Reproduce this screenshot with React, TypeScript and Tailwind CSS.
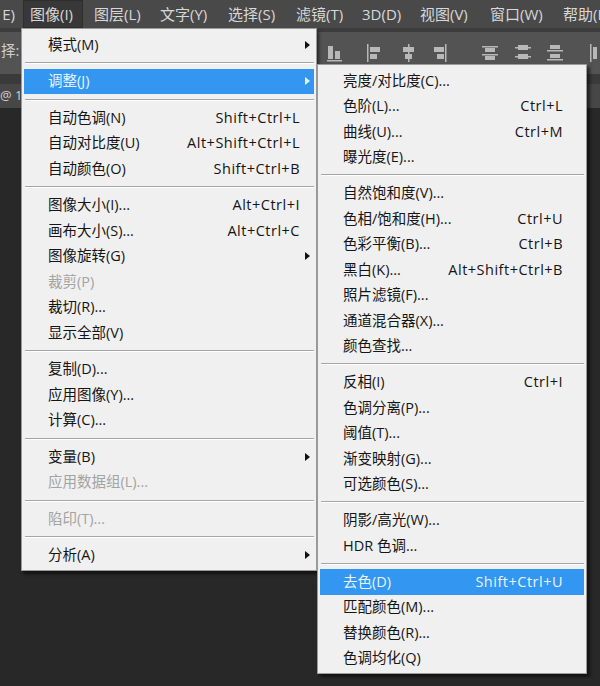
import React from 'react';

type Item =
  | { kind: 'sep' }
  | { kind: 'item'; label: string; shortcut?: string; arrow?: boolean; disabled?: boolean; active?: boolean };

const imageMenu: Item[] = [
  { kind: 'item', label: '模式(M)', arrow: true },
  { kind: 'sep' },
  { kind: 'item', label: '调整(J)', arrow: true, active: true },
  { kind: 'sep' },
  { kind: 'item', label: '自动色调(N)', shortcut: 'Shift+Ctrl+L' },
  { kind: 'item', label: '自动对比度(U)', shortcut: 'Alt+Shift+Ctrl+L' },
  { kind: 'item', label: '自动颜色(O)', shortcut: 'Shift+Ctrl+B' },
  { kind: 'sep' },
  { kind: 'item', label: '图像大小(I)...', shortcut: 'Alt+Ctrl+I' },
  { kind: 'item', label: '画布大小(S)...', shortcut: 'Alt+Ctrl+C' },
  { kind: 'item', label: '图像旋转(G)', arrow: true },
  { kind: 'item', label: '裁剪(P)', disabled: true },
  { kind: 'item', label: '裁切(R)...' },
  { kind: 'item', label: '显示全部(V)' },
  { kind: 'sep' },
  { kind: 'item', label: '复制(D)...' },
  { kind: 'item', label: '应用图像(Y)...' },
  { kind: 'item', label: '计算(C)...' },
  { kind: 'sep' },
  { kind: 'item', label: '变量(B)', arrow: true },
  { kind: 'item', label: '应用数据组(L)...', disabled: true },
  { kind: 'sep' },
  { kind: 'item', label: '陷印(T)...', disabled: true },
  { kind: 'sep' },
  { kind: 'item', label: '分析(A)', arrow: true },
];

const adjustMenu: Item[] = [
  { kind: 'item', label: '亮度/对比度(C)...' },
  { kind: 'item', label: '色阶(L)...', shortcut: 'Ctrl+L' },
  { kind: 'item', label: '曲线(U)...', shortcut: 'Ctrl+M' },
  { kind: 'item', label: '曝光度(E)...' },
  { kind: 'sep' },
  { kind: 'item', label: '自然饱和度(V)...' },
  { kind: 'item', label: '色相/饱和度(H)...', shortcut: 'Ctrl+U' },
  { kind: 'item', label: '色彩平衡(B)...', shortcut: 'Ctrl+B' },
  { kind: 'item', label: '黑白(K)...', shortcut: 'Alt+Shift+Ctrl+B' },
  { kind: 'item', label: '照片滤镜(F)...' },
  { kind: 'item', label: '通道混合器(X)...' },
  { kind: 'item', label: '颜色查找...' },
  { kind: 'sep' },
  { kind: 'item', label: '反相(I)', shortcut: 'Ctrl+I' },
  { kind: 'item', label: '色调分离(P)...' },
  { kind: 'item', label: '阈值(T)...' },
  { kind: 'item', label: '渐变映射(G)...' },
  { kind: 'item', label: '可选颜色(S)...' },
  { kind: 'sep' },
  { kind: 'item', label: '阴影/高光(W)...' },
  { kind: 'item', label: 'HDR 色调...' },
  { kind: 'sep' },
  { kind: 'item', label: '去色(D)', shortcut: 'Shift+Ctrl+U', active: true },
  { kind: 'item', label: '匹配颜色(M)...' },
  { kind: 'item', label: '替换颜色(R)...' },
  { kind: 'item', label: '色调均化(Q)' },
];

const topMenus = [
  { label: '图层(L)', w: 'w-[66px]' },
  { label: '文字(Y)', w: 'w-[68px]' },
  { label: '选择(S)', w: 'w-[68px]' },
  { label: '滤镜(T)', w: 'w-[66px]' },
  { label: '3D(D)', w: 'w-[58px]' },
  { label: '视图(V)', w: 'w-[70px]' },
  { label: '窗口(W)', w: 'w-[73px]' },
  { label: '帮助(H)', w: 'w-[60px]' },
];

function Arrow({ light }: { light?: boolean }) {
  return (
    <span
      className={`ml-[5px] block h-0 w-0 border-y-[4px] border-l-[5px] border-y-transparent ${
        light ? 'border-l-[#e8f4ff]' : 'border-l-[#111111]'
      }`}
    />
  );
}

function Menu({ items, className, sep, row }: { items: Item[]; className: string; sep: string; row: string }) {
  return (
    <div className={className}>
      {items.map((it, i) =>
        it.kind === 'sep' ? (
          <div key={i} className={`flex items-center pl-[1px] ${sep}`}>
            <div className="h-[2px] w-full border-t border-b border-t-[#a6a6a6] border-b-white" />
          </div>
        ) : (
          <div
            key={i}
            className={`grid h-[25.5px] grid-cols-[1fr_auto_14px] items-center ${row} ${
              it.active ? 'bg-[#3396f0] text-[#e8f4ff]' : it.disabled ? 'text-[#a3a3a3]' : 'text-[#151515]'
            }`}
          >
            <span className="whitespace-nowrap">{it.label}</span>
            <span className="whitespace-nowrap tracking-[0.5px]">{it.shortcut}</span>
            <span>{it.arrow && <Arrow light={it.active} />}</span>
          </div>
        )
      )}
    </div>
  );
}

// toolbar alignment glyphs, only the right part shows past the menus
function AlignIcon({ type }: { type: number }) {
  const c = 'fill-[#b8b8b8]';
  return (
    <svg width="16" height="20" viewBox="0 0 16 20" className="shrink-0">
      {type === 0 && (
        <g className={c}>
          <rect x="1" y="3" width="5" height="13" />
          <rect x="8" y="8" width="5" height="8" />
          <rect x="0" y="17" width="15" height="1.5" />
        </g>
      )}
      {type === 1 && (
        <g className={c}>
          <rect x="0" y="1" width="1.5" height="18" />
          <rect x="3" y="4" width="10" height="5" />
          <rect x="3" y="11" width="7" height="5" />
        </g>
      )}
      {type === 2 && (
        <g className={c}>
          <rect x="7" y="1" width="1.5" height="18" />
          <rect x="2" y="4" width="11" height="5" />
          <rect x="4" y="11" width="7" height="5" />
        </g>
      )}
      {type === 3 && (
        <g className={c}>
          <rect x="14" y="1" width="1.5" height="18" />
          <rect x="3" y="4" width="10" height="5" />
          <rect x="6" y="11" width="7" height="5" />
        </g>
      )}
      {type === 4 && (
        <g className={c}>
          <rect x="0" y="3" width="16" height="1.5" />
          <rect x="3" y="5" width="10" height="4" />
          <rect x="0" y="11" width="16" height="1.5" />
          <rect x="3" y="13" width="10" height="4" />
        </g>
      )}
      {type === 5 && (
        <g className={c}>
          <rect x="3" y="2" width="10" height="5" />
          <rect x="0" y="4" width="16" height="1.5" />
          <rect x="3" y="11" width="10" height="5" />
          <rect x="0" y="13" width="16" height="1.5" />
        </g>
      )}
      {type === 6 && (
        <g className={c}>
          <rect x="3" y="2" width="10" height="4" />
          <rect x="0" y="7" width="16" height="1.5" />
          <rect x="3" y="11" width="10" height="4" />
          <rect x="0" y="16" width="16" height="1.5" />
        </g>
      )}
      {type === 7 && (
        <g className={c}>
          <rect x="0" y="1" width="1.5" height="18" />
          <rect x="3" y="4" width="4" height="12" />
        </g>
      )}
    </svg>
  );
}

export default function App() {
  return (
    <div className="relative flex h-[686px] w-[600px] flex-col overflow-hidden bg-[#282828] font-['Open_Sans','Noto_Sans_CJK_SC',sans-serif] text-[14.5px]">
      {/* menu bar */}
      <div className="flex h-[28px] shrink-0 items-stretch overflow-hidden whitespace-nowrap bg-[#494949] text-[15px] text-[#d8d8d8]">
        <div className="flex w-[23px] shrink-0 items-center justify-end pr-[8px]">E)</div>
        <div className="flex w-[60px] shrink-0 items-center border border-[#2e2e2e] bg-[#383838] pl-[6px]">图像(I)</div>
        {topMenus.map((m) => (
          <div key={m.label} className={`flex shrink-0 items-center pl-[11px] ${m.w}`}>
            {m.label}
          </div>
        ))}
      </div>
      <div className="h-[4px] shrink-0 bg-[#3c3c3c]" />

      {/* options bar */}
      <div className="flex h-[42px] shrink-0 items-center bg-[#535353] text-[#d0d0d0]">
        <div className="w-[327px] shrink-0 pl-[1px] pb-[4px]">择:</div>
        <AlignIcon type={0} />
        <div className="ml-[24px]"><AlignIcon type={1} /></div>
        <div className="ml-[18px]"><AlignIcon type={2} /></div>
        <div className="ml-[14px]"><AlignIcon type={3} /></div>
        <div className="ml-[19px] h-[26px] w-px bg-[#3a3a3a]" />
        <div className="ml-[16px]"><AlignIcon type={4} /></div>
        <div className="ml-[17px]"><AlignIcon type={5} /></div>
        <div className="ml-[16px]"><AlignIcon type={6} /></div>
        <div className="ml-[27px]"><AlignIcon type={7} /></div>
      </div>
      <div className="h-[10px] shrink-0 bg-[#3a3a3a]" />

      {/* document tab, mostly under the open menu */}
      <div className="flex h-[24px] shrink-0 items-center bg-[#474747] text-[13px] text-[#cfcfcf]">
        <span className="w-[20px] overflow-hidden whitespace-nowrap">@ 1</span>
      </div>
      <div className="flex-1 bg-[#282828]" />

      {/* 图像 dropdown */}
      <Menu
        items={imageMenu}
        className="absolute left-[21px] top-[28px] w-[296px] border border-[#9a9a9a] bg-[#f0f0f0] px-[2px] pt-[3px] pb-[2px] shadow-[2px_3px_3px_rgba(0,0,0,0.55)]"
        sep="h-[11px]"
        row="pl-[24px] pr-0"
      />

      {/* 调整 submenu */}
      <Menu
        items={adjustMenu}
        className="absolute left-[317px] top-[64px] w-[270px] border border-[#9a9a9a] bg-[#f0f0f0] px-[2px] pt-[3px] pb-[2px] shadow-[3px_3px_3px_rgba(0,0,0,0.55)]"
        sep="h-[10.5px]"
        row="pl-[23px] pr-[7px]"
      />
    </div>
  );
}
